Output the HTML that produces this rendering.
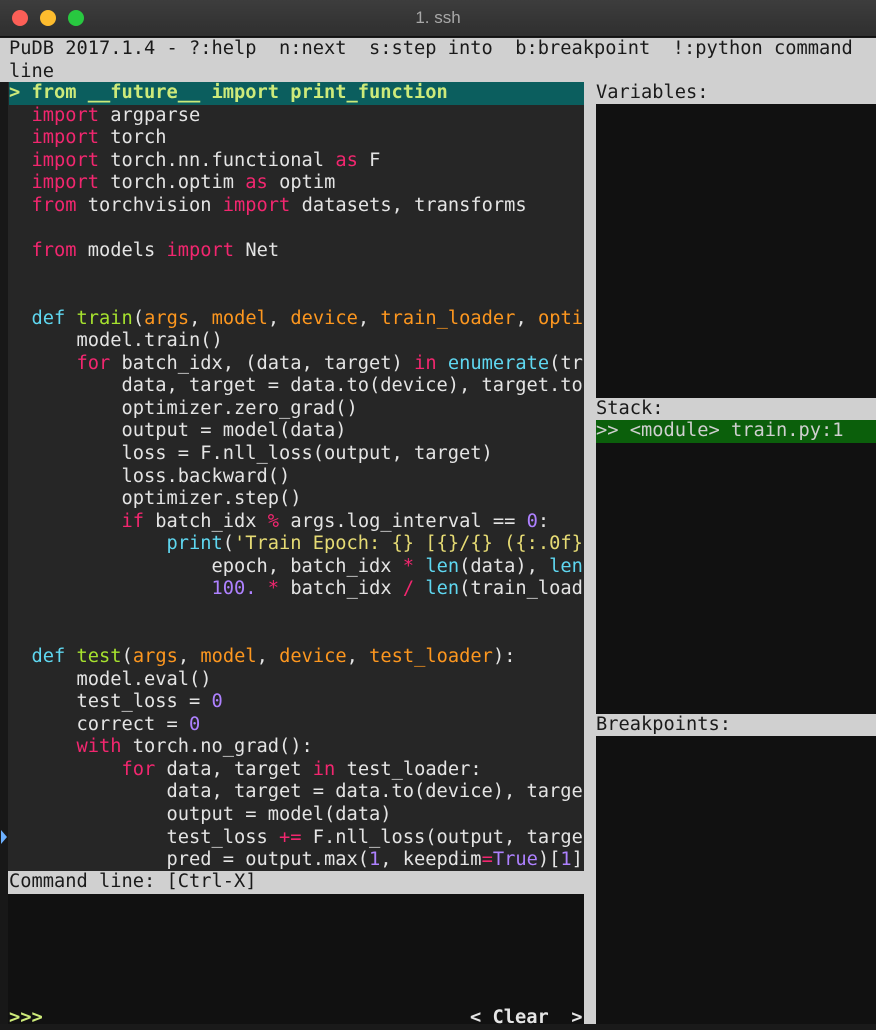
<!DOCTYPE html>
<html><head><meta charset="utf-8"><style>
*{margin:0;padding:0;box-sizing:border-box}
body{width:876px;height:1024px;overflow:hidden;background:#1a1a1a;font-family:"DejaVu Sans Mono","Liberation Mono",monospace;font-size:18.7px;position:relative}
.title{position:absolute;left:0;top:0;width:876px;height:37px;background:linear-gradient(#3d3d3d,#2f2f2f);border-bottom:1px solid #111}
.title .t{position:absolute;left:0;right:0;top:8px;text-align:center;color:#a8a8a8;font-family:"Liberation Sans",sans-serif;font-size:17px}
.dot{position:absolute;top:10px;width:16px;height:16px;border-radius:50%}
.bar{position:absolute;background:#d0d0d0;color:#1a1a1a;white-space:pre;line-height:22.56px;height:22.56px;padding-left:9px}
pre{font-family:inherit;font-size:inherit;line-height:22.56px;white-space:pre}
.code{position:absolute;left:8px;top:82px;width:576px;height:789px;background:#262626;color:#e4e4e4;overflow:hidden;padding-left:1px}
.k{color:#f2266f}.d{color:#5fd7f0}.f{color:#a6e22e}.a{color:#fd971f}.n{color:#ae81ff}.s{color:#e6db74}.b{color:#5fd7f0}
.hl{background:#0b5e5e;color:#cdea7a;font-weight:bold;display:block}
.pane{position:absolute;background:#111}
</style></head><body>
<div class="title"><div class="dot" style="left:12px;background:#fc5f57"></div><div class="dot" style="left:40px;background:#fdbc2e"></div><div class="dot" style="left:68px;background:#28c840"></div><div class="t">1. ssh</div></div>
<div class="bar" style="left:0;top:38px;width:876px;height:44px;line-height:22.56px">PuDB 2017.1.4 - ?:help  n:next  s:step into  b:breakpoint  !:python command
line</div>
<div class="pane" style="left:0;top:82px;width:8px;height:942px;background:#181818"></div>
<div style="position:absolute;left:1px;top:830px;width:0;height:0;border-top:7px solid transparent;border-bottom:7px solid transparent;border-left:6px solid #6cb0ff"></div>
<div class="code"><pre><span class="hl">&gt; from __future__ import print_function                </span>  <span class="k">import</span> argparse
  <span class="k">import</span> torch
  <span class="k">import</span> torch.nn.functional <span class="k">as</span> F
  <span class="k">import</span> torch.optim <span class="k">as</span> optim
  <span class="k">from</span> torchvision <span class="k">import</span> datasets, transforms

  <span class="k">from</span> models <span class="k">import</span> Net


  <span class="d">def</span> <span class="f">train</span>(<span class="a">args</span>, <span class="a">model</span>, <span class="a">device</span>, <span class="a">train_loader</span>, <span class="a">opti</span>
      model.train()
      <span class="k">for</span> batch_idx, (data, target) <span class="k">in</span> <span class="b">enumerate</span>(tr
          data, target = data.to(device), target.to
          optimizer.zero_grad()
          output = model(data)
          loss = F.nll_loss(output, target)
          loss.backward()
          optimizer.step()
          <span class="k">if</span> batch_idx <span class="k">%</span> args.log_interval == <span class="n">0</span>:
              <span class="b">print</span>(<span class="s">'Train Epoch: {} [{}/{} ({:.0f}</span>
                  epoch, batch_idx <span class="k">*</span> <span class="b">len</span>(data), <span class="b">len</span>
                  <span class="n">100.</span> <span class="k">*</span> batch_idx <span class="k">/</span> <span class="b">len</span>(train_load


  <span class="d">def</span> <span class="f">test</span>(<span class="a">args</span>, <span class="a">model</span>, <span class="a">device</span>, <span class="a">test_loader</span>):
      model.eval()
      test_loss = <span class="n">0</span>
      correct = <span class="n">0</span>
      <span class="k">with</span> torch.no_grad():
          <span class="k">for</span> data, target <span class="k">in</span> test_loader:
              data, target = data.to(device), targe
              output = model(data)
              test_loss <span class="k">+=</span> F.nll_loss(output, targe
              pred = output.max(<span class="n">1</span>, keepdim<span class="k">=</span><span class="n">True</span>)[<span class="n">1</span>]</pre></div>
<div class="bar" style="left:8px;top:871px;width:576px;padding-left:1px">Command line: [Ctrl-X]</div>
<div class="pane" style="left:8px;top:894px;width:576px;height:130px"></div>
<div style="position:absolute;left:9px;top:1007px;color:#cdea7a;font-weight:bold;line-height:22.56px">&gt;&gt;&gt;</div>
<div style="position:absolute;left:470px;top:1007px;color:#e4e4e4;font-weight:bold;line-height:22.56px;white-space:pre">&lt; Clear  &gt;</div>
<div style="position:absolute;left:584px;top:82px;width:12px;height:942px;background:#d0d0d0"></div>
<div class="bar" style="left:596px;top:82px;width:280px;padding-left:0">Variables:</div>
<div class="pane" style="left:596px;top:104px;width:280px;height:294px"></div>
<div class="bar" style="left:596px;top:398px;width:280px;padding-left:0">Stack:</div>
<div style="position:absolute;left:596px;top:420px;width:280px;height:23px;background:#0b5f0b;color:#d0d0d0;line-height:22.56px;white-space:pre">&gt;&gt; &lt;module&gt; train.py:1</div>
<div class="pane" style="left:596px;top:443px;width:280px;height:271px"></div>
<div class="bar" style="left:596px;top:714px;width:280px;padding-left:0">Breakpoints:</div>
<div class="pane" style="left:596px;top:736px;width:280px;height:288px"></div>
</body></html>
